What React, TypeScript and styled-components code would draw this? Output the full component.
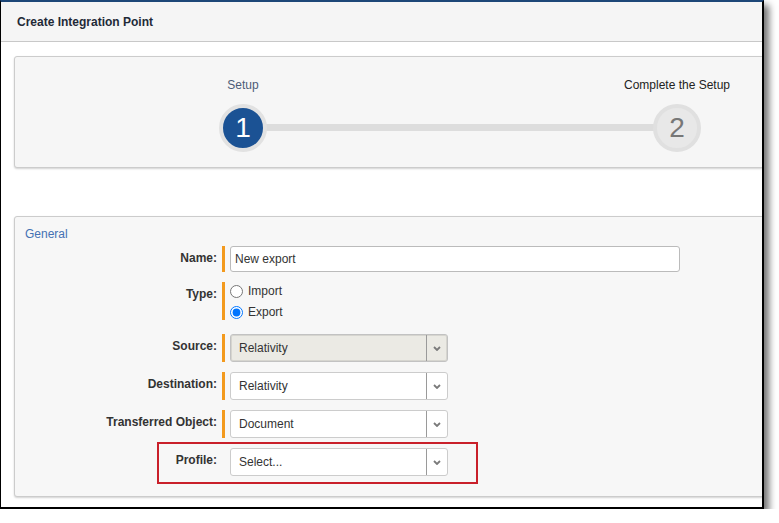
import React from "react";
import styled, { createGlobalStyle } from "styled-components";

const GlobalStyle = createGlobalStyle`
  body {
    margin: 0;
    background: #ffffff;
    font-family: "Liberation Sans", Arial, sans-serif;
    font-size: 12px;
    color: #333333;
  }
`;

const Frame = styled.div`
  width: 764px;
  height: 509px;
  box-sizing: border-box;
  border: 1px solid #000000;
  border-top: 2px solid #1d4778;
  border-right-width: 2px;
  border-bottom-width: 2px;
  background: #ffffff;
  overflow: hidden;
  box-shadow: 5px 5px 7px rgba(0, 0, 0, 0.55);
`;

const Header = styled.div`
  height: 39px;
  background: #f5f5f5;
  border-bottom: 1px solid #c8c8c8;
  display: flex;
  align-items: center;
  padding-left: 16px;
`;

const Title = styled.span`
  font-weight: bold;
  font-size: 12px;
  color: #1f2a38;
`;

const Card = styled.div`
  margin-left: 13px;
  width: 780px;
  box-sizing: border-box;
  background: #f6f6f6;
  border: 1px solid #cccccc;
  border-radius: 3px;
  box-shadow: 0 1px 2px rgba(0, 0, 0, 0.18);
`;

const StepperCard = styled(Card)`
  margin-top: 14px;
  height: 112px;
  padding: 21px 0 0 204px;
`;

const StepperRow = styled.div`
  display: flex;
  align-items: flex-end;
`;

const Step = styled.div`
  width: 48px;
  display: flex;
  flex-direction: column;
  align-items: center;
  position: relative;
  z-index: 1;
`;

const StepLabel = styled.span<{ $active?: boolean }>`
  white-space: nowrap;
  line-height: 14px;
  font-size: 12px;
  color: ${(p) => (p.$active ? "#4d5c78" : "#222222")};
  margin-bottom: 12px;
`;

const StepCircle = styled.div<{ $active?: boolean }>`
  width: 48px;
  height: 48px;
  box-sizing: border-box;
  border-radius: 50%;
  border: 4px solid ${(p) => (p.$active ? "#e2e2e2" : "#e0e0e0")};
  background: ${(p) => (p.$active ? "#1b5294" : "#e8e8e8")};
  color: ${(p) => (p.$active ? "#ffffff" : "#777777")};
  display: flex;
  align-items: center;
  justify-content: center;
  font-size: 28px;
  line-height: 1;
`;

const Track = styled.div`
  width: 394px;
  height: 7px;
  margin: 0 -4px 21px;
  background: #dddddd;
`;

const GeneralCard = styled(Card)`
  margin-top: 48px;
  padding: 10px 0 20px 0;
  background: #f7f7f7;
`;

const SectionTitle = styled.div`
  padding-left: 10px;
  line-height: 14px;
  color: #4471b3;
  font-size: 12px;
  margin-bottom: 5px;
`;

const Row = styled.div<{ $gap?: number }>`
  display: flex;
  align-items: flex-start;
  margin-bottom: ${(p) => p.$gap ?? 10}px;
  position: relative;
`;

const Label = styled.label`
  width: 202px;
  flex: none;
  text-align: right;
  font-weight: bold;
  color: #333333;
  line-height: 14px;
  padding-top: 5px;
`;

const Field = styled.div<{ $required?: boolean; $padTop?: number }>`
  margin-left: 5px;
  padding-left: 5px;
  padding-top: ${(p) => p.$padTop ?? 0}px;
  border-left: 3px solid
    ${(p) => (p.$required ? "#f39a1e" : "transparent")};
  display: flex;
  flex-direction: column;
`;

const TextInput = styled.input`
  width: 450px;
  height: 26px;
  box-sizing: border-box;
  border: 1px solid #bbbbbb;
  border-radius: 3px;
  padding: 0 4px;
  font-family: inherit;
  font-size: 12px;
  color: #333333;
  background: #ffffff;
  outline: none;
`;

const RadioOption = styled.label`
  display: flex;
  align-items: center;
  height: 16px;
  gap: 5px;
  color: #333333;

  & + & {
    margin-top: 5px;
  }

  input {
    margin: 0;
    width: 13px;
    height: 13px;
  }
`;

const SelectBox = styled.div<{ $disabled?: boolean }>`
  width: 218px;
  height: 28px;
  box-sizing: border-box;
  display: flex;
  border: 1px solid ${(p) => (p.$disabled ? "#c2c2c2" : "#cccccc")};
  border-radius: 3px;
  background: ${(p) => (p.$disabled ? "#ebeae4" : "#ffffff")};
  box-shadow: ${(p) =>
    p.$disabled ? "inset 0 0 0 1px #d6d5cf" : "none"};
`;

const SelectValue = styled.span`
  flex: 1;
  display: flex;
  align-items: center;
  padding-left: 8px;
  color: #333333;
`;

const SelectArrow = styled.span`
  width: 20px;
  border-left: 1px solid #9a9a9a;
  display: flex;
  align-items: center;
  justify-content: center;
`;

const Highlight = styled.div`
  position: absolute;
  left: 142px;
  top: -6px;
  width: 321px;
  height: 42px;
  box-sizing: border-box;
  border: 2px solid #c9202a;
  pointer-events: none;
`;

const Chevron = () => (
  <svg width="8" height="5" viewBox="0 0 8 5">
    <path d="M1 1 L4 4 L7 1" fill="none" stroke="#7a7a7a" strokeWidth="1.8" />
  </svg>
);

type SelectProps = { value: string; disabled?: boolean };

const Select = ({ value, disabled }: SelectProps) => (
  <SelectBox $disabled={disabled}>
    <SelectValue>{value}</SelectValue>
    <SelectArrow>
      <Chevron />
    </SelectArrow>
  </SelectBox>
);

export default function App() {
  return (
    <>
      <GlobalStyle />
      <Frame>
        <Header>
          <Title>Create Integration Point</Title>
        </Header>

        <StepperCard>
          <StepperRow>
            <Step>
              <StepLabel $active>Setup</StepLabel>
              <StepCircle $active>1</StepCircle>
            </Step>
            <Track />
            <Step>
              <StepLabel>Complete the Setup</StepLabel>
              <StepCircle>2</StepCircle>
            </Step>
          </StepperRow>
        </StepperCard>

        <GeneralCard>
          <SectionTitle>General</SectionTitle>
          <Row>
            <Label>Name:</Label>
            <Field $required>
              <TextInput defaultValue="New export" />
            </Field>
          </Row>
          <Row $gap={14}>
            <Label>Type:</Label>
            <Field $required $padTop={1}>
              <RadioOption>
                <input type="radio" name="type" />
                Import
              </RadioOption>
              <RadioOption>
                <input type="radio" name="type" defaultChecked />
                Export
              </RadioOption>
            </Field>
          </Row>
          <Row>
            <Label>Source:</Label>
            <Field $required>
              <Select value="Relativity" disabled />
            </Field>
          </Row>
          <Row>
            <Label>Destination:</Label>
            <Field $required>
              <Select value="Relativity" />
            </Field>
          </Row>
          <Row>
            <Label>Transferred Object:</Label>
            <Field $required>
              <Select value="Document" />
            </Field>
          </Row>
          <Row $gap={0}>
            <Label>Profile:</Label>
            <Field>
              <Select value="Select..." />
            </Field>
            <Highlight />
          </Row>
        </GeneralCard>
      </Frame>
    </>
  );
}
